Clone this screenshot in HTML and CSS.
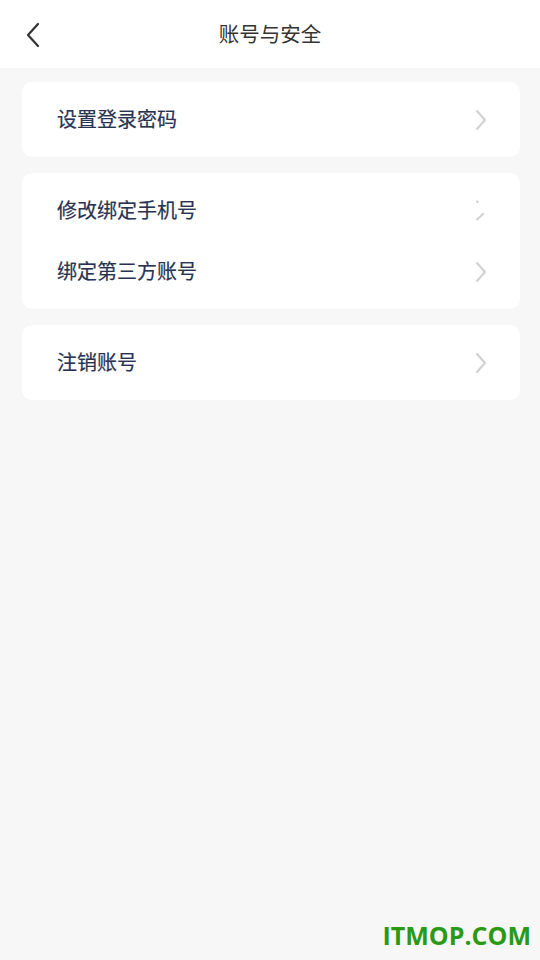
FILE: index.html
```html
<!DOCTYPE html>
<html lang="zh-CN">
<head>
    <meta charset="UTF-8">
    <meta name="viewport" content="width=device-width, initial-scale=1.0">
    <title>账号与安全</title>
    <link rel="stylesheet" href="styles.css">
</head>
<body>

    <!-- Cabeçalho -->
    <header class="topo">
        <div class="voltar">
            <svg width="16" height="26" viewBox="0 0 16 26">
                <path d="M13 2 L3 13 L13 24" fill="none" stroke="#333" stroke-width="2.2" stroke-linecap="round" stroke-linejoin="round"/>
            </svg>
        </div>
        <h1>账号与安全</h1>
    </header>

    <main class="lista">
        <section class="cartao">
            <div class="linha">
                <span>设置登录密码</span>
                <svg class="seta" width="14" height="22" viewBox="0 0 14 22"><path d="M3 2 L11 11 L3 20" /></svg>
            </div>
        </section>

        <section class="cartao">
            <div class="linha">
                <span>修改绑定手机号</span>
                <svg class="seta" width="14" height="22" viewBox="0 0 14 22"><path d="M3 1.5 L3.6 2" /><path d="M3 19.5 L9 14" /></svg>
            </div>
            <div class="linha">
                <span>绑定第三方账号</span>
                <svg class="seta" width="14" height="22" viewBox="0 0 14 22"><path d="M3 2 L11 11 L3 20" /></svg>
            </div>
        </section>

        <section class="cartao">
            <div class="linha">
                <span>注销账号</span>
                <svg class="seta" width="14" height="22" viewBox="0 0 14 22"><path d="M3 2 L11 11 L3 20" /></svg>
            </div>
        </section>
    </main>

    <div class="marca">ITMOP.COM</div>

</body>
</html>
```

FILE: styles.css
```css
body {
    font-family: "Noto Sans CJK SC", "Noto Sans", sans-serif;
    background-color: #f7f7f7;
    margin: 0;
    padding: 0;
    height: 960px;
    position: relative;
}

/* Cabeçalho */
.topo {
    height: 68px;
    background: #fff;
    display: flex;
    align-items: center;
    justify-content: center;
    position: relative;
}

.topo h1 {
    margin: 0 0 3px;
    font-size: 20.5px;
    font-weight: normal;
    color: #333;
}

.voltar {
    position: absolute;
    left: 25px;
    top: 22px;
    height: 26px;
}

/* Lista */
.lista {
    padding: 14px 20px 0 22px;
    display: flex;
    flex-direction: column;
    gap: 16px;
}

.cartao {
    background: #fff;
    border-radius: 10px;
    padding: 7px 0;
}

.linha {
    height: 61px;
    display: flex;
    align-items: center;
    justify-content: space-between;
    padding: 0 32px 0 35px;
    font-size: 20px;
    color: #283352;
}

.linha span {
    margin-bottom: 3px;
    -webkit-text-stroke: 0.2px #283352;
}

.seta path {
    fill: none;
    stroke: #d2d2d2;
    stroke-width: 2.2;
    stroke-linecap: round;
    stroke-linejoin: round;
}

/* Marca d'água */
.marca {
    position: absolute;
    right: 9px;
    bottom: 8px;
    font-family: "Open Sans", sans-serif;
    font-weight: bold;
    font-size: 25px;
    color: #2a9a14;
}
```
